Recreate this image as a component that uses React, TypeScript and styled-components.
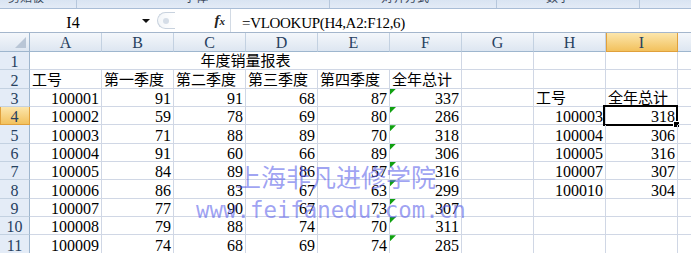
/*==================== Imports ====================*/

import React from "react"
import styled, { createGlobalStyle, css } from "styled-components"

/*==================== Data ====================*/

const COLUMNS = ["A", "B", "C", "D", "E", "F", "G", "H", "I", "J"]

const ids = ["100001", "100002", "100003", "100004", "100005", "100006", "100007", "100008", "100009"]
const quarters = [
    [91, 59, 71, 91, 84, 86, 77, 79, 74],
    [91, 78, 88, 60, 89, 83, 90, 88, 68],
    [68, 69, 89, 66, 86, 67, 67, 74, 69],
    [87, 80, 70, 89, 57, 63, 73, 70, 74],
]
const totals = [337, 286, 318, 306, 316, 299, 307, 311, 285]
const lookup = [
    ["100003", "318"],
    ["100004", "306"],
    ["100005", "316"],
    ["100007", "307"],
    ["100010", "304"],
]

const ribbonGroups = [
    { label: "剪贴板", width: 77, pad: 24 },
    { label: "字体", width: 253, pad: 14 },
    { label: "对齐方式", width: 167, pad: 16 },
    { label: "数字", width: 143, pad: 20 },
    { label: "", width: 60, pad: 0 },
]

type CellSpec = { text?: string; cjk?: boolean; right?: boolean; flag?: boolean; active?: boolean }

const buildRow = (r: number): CellSpec[] => {
    if (r === 2) {
        const heads = ["工号", "第一季度", "第二季度", "第三季度", "第四季度", "全年总计"]
        return [...heads.map(t => ({ text: t, cjk: true })), {}, {}, {}, {}]
    }
    const i = r - 3
    const row: CellSpec[] = [
        { text: ids[i], right: true },
        ...quarters.map(q => ({ text: String(q[i]), right: true })),
        { text: String(totals[i]), right: true, flag: true },
        {},
    ]
    if (r === 3) {
        row.push({ text: "工号", cjk: true }, { text: "全年总计", cjk: true })
    } else if (r >= 4 && r <= 8) {
        const [id, total] = lookup[r - 4]
        row.push({ text: id, right: true }, { text: total, right: true, active: r === 4 })
    } else {
        row.push({}, {})
    }
    row.push({})
    return row
}

/*==================== Styles ====================*/

const GlobalStyle = createGlobalStyle`
    html, body {
        margin: 0;
        background: #ffffff;
        overflow: hidden;
    }
`

const Window = styled.div`
    position: relative;
    width: 691px;
    height: 253px;
    overflow: hidden;
    background: #ffffff;
    font-family: "Liberation Serif", "Noto Sans CJK SC", serif;
`

const Ribbon = styled.div`
    display: flex;
    height: 8px;
    overflow: hidden;
    background: linear-gradient(#d9e4f2, #e3ebf6);
    border-bottom: 1px solid #a9bdd6;
`

const RibbonGroup = styled.div<{ $width: number; $pad: number }>`
    flex: 0 0 ${p => p.$width}px;
    display: flex;
    justify-content: center;
    align-items: flex-start;
    padding-right: ${p => p.$pad}px;
    box-sizing: border-box;
    border-right: 1px solid #b6c7dc;
`

const RibbonLabel = styled.span`
    margin-top: -10px;
    font: 12px/13px "Noto Sans CJK SC", sans-serif;
    color: #3d4a5c;
`

const FormulaBar = styled.div`
    display: flex;
    height: 23px;
    background: #ffffff;
    border-bottom: 1px solid #a4b6cc;
`

const NameBox = styled.div`
    flex: 0 0 155px;
    display: flex;
    align-items: flex-end;
    box-sizing: border-box;
`

const NameText = styled.span`
    flex: 1;
    text-align: center;
    padding-left: 4px;
    font-size: 16px;
    line-height: 18px;
    color: #000;
`

const DropArrow = styled.span`
    flex: 0 0 0;
    align-self: center;
    margin-right: 5px;
    border-left: 4px solid transparent;
    border-right: 4px solid transparent;
    border-top: 4px solid #111;
`

const Splitter = styled.div`
    flex: 0 0 18px;
    align-self: center;
    height: 17px;
    margin-left: 2px;
    display: flex;
    align-items: center;
    padding-left: 5px;
    box-sizing: border-box;
    border: 1px solid #c8d2de;
    border-right: none;
    border-radius: 9px 0 0 9px;
    background: linear-gradient(90deg, #f3f6f9, #ffffff);
`

const SplitterDot = styled.span`
    width: 6px;
    height: 6px;
    border-radius: 50%;
    background: #d5dde7;
`

const FxButton = styled.div`
    flex: 0 0 56px;
    display: flex;
    align-items: center;
    justify-content: flex-end;
    padding-right: 5px;
    box-sizing: border-box;
    font: italic bold 15px "Liberation Serif", serif;
    color: #222;
    border-right: 1px solid #d2dae4;

    small {
        font-size: 11px;
    }
`

const FormulaText = styled.div`
    flex: 1;
    display: flex;
    align-items: flex-end;
    padding-left: 11px;
    font-size: 15px;
    line-height: 17px;
    letter-spacing: -0.3px;
    color: #000;
    white-space: nowrap;
`

const Sheet = styled.div`
    display: grid;
    grid-template-columns: 30px repeat(10, 72px);
    grid-template-rows: 19px;
    grid-auto-rows: 18.33px;
`

const Corner = styled.div`
    display: flex;
    align-items: flex-end;
    justify-content: flex-end;
    padding: 0 3px 3px 0;
    background: linear-gradient(#f4f7fb, #dde6f1);
    border-right: 1px solid #9eb6ce;
    border-bottom: 1px solid #9eb6ce;
`

const CornerMark = styled.span`
    width: 11px;
    height: 11px;
    background: #b9c6d6;
    clip-path: polygon(100% 0, 100% 100%, 0 100%);
`

const selectedHead = css`
    background: linear-gradient(#fce6ac, #f2c15d);
    border-color: #e0a03c;
    box-shadow: inset 1px 0 #e0a03c;
`

const ColHead = styled.div<{ $selected?: boolean }>`
    display: flex;
    align-items: flex-end;
    justify-content: center;
    background: linear-gradient(#f4f7fb, #dde6f1);
    border-right: 1px solid #c3d1e1;
    border-bottom: 1px solid #9eb6ce;
    font-size: 16px;
    line-height: 16px;
    color: #27415f;
    ${p => p.$selected && selectedHead}
`

const RowHead = styled.div<{ $selected?: boolean }>`
    display: flex;
    align-items: flex-end;
    justify-content: center;
    background: #e4ecf7;
    border-right: 1px solid #9eb6ce;
    border-bottom: 1px solid #c3d1e1;
    font-size: 16px;
    line-height: 14px;
    color: #27415f;
    ${p => p.$selected && selectedHead}
`

const Cell = styled.div<{ $right?: boolean; $cjk?: boolean; $span?: number; $center?: boolean }>`
    position: relative;
    display: flex;
    align-items: flex-end;
    justify-content: ${p => (p.$center ? "center" : p.$right ? "flex-end" : "flex-start")};
    grid-column: span ${p => p.$span ?? 1};
    padding: 0 2px 0 2px;
    border-right: 1px solid #d0d7e5;
    border-bottom: 1px solid #d0d7e5;
    white-space: nowrap;
    color: #000;
    ${p =>
        p.$cjk
            ? css`
                  font: 15px/19px "Noto Sans CJK SC", sans-serif;
              `
            : css`
                  font-size: 16px;
                  line-height: 14px;
              `}
`

const ErrorFlag = styled.span`
    position: absolute;
    left: 0;
    top: 0;
    width: 6px;
    height: 6px;
    background: #10a010;
    clip-path: polygon(0 0, 100% 0, 0 100%);
`

const ActiveFrame = styled.span`
    position: absolute;
    top: -2px;
    left: -3px;
    right: -1px;
    bottom: -2px;
    border: 2px solid #000;
    pointer-events: none;

    &::after {
        content: "";
        position: absolute;
        right: -4px;
        bottom: -4px;
        width: 5px;
        height: 5px;
        background: #000;
        border: 1px solid #fff;
    }
`

const Watermark = styled.div`
    position: absolute;
    left: 196px;
    top: 164px;
    display: flex;
    flex-direction: column;
    pointer-events: none;
    color: rgba(78, 84, 232, 0.55);
`

const WatermarkName = styled.span`
    margin-left: 40px;
    font: 25px/25px "Noto Sans CJK SC", sans-serif;
`

const WatermarkUrl = styled.span`
    margin-top: 10px;
    font: 22.4px/22px "DejaVu Sans Mono", monospace;
`

/*==================== Component ====================*/

const App = () => {
    const rows = Array.from({ length: 10 }, (_, k) => k + 2)

    return (
        <Window>
            <GlobalStyle />
            <Ribbon>
                {ribbonGroups.map((g, i) => (
                    <RibbonGroup key={i} $width={g.width} $pad={g.pad}>
                        <RibbonLabel>{g.label}</RibbonLabel>
                    </RibbonGroup>
                ))}
            </Ribbon>

            <FormulaBar>
                <NameBox>
                    <NameText>I4</NameText>
                    <DropArrow />
                </NameBox>
                <Splitter>
                    <SplitterDot />
                </Splitter>
                <FxButton>
                    f<small>x</small>
                </FxButton>
                <FormulaText>=VLOOKUP(H4,A2:F12,6)</FormulaText>
            </FormulaBar>

            <Sheet>
                <Corner>
                    <CornerMark />
                </Corner>
                {COLUMNS.map(c => (
                    <ColHead key={c} $selected={c === "I"}>
                        {c}
                    </ColHead>
                ))}

                <RowHead>1</RowHead>
                <Cell $cjk $span={6} $center>
                    年度销量报表
                </Cell>
                <Cell />
                <Cell />
                <Cell />
                <Cell />

                {rows.map(r => (
                    <React.Fragment key={r}>
                        <RowHead $selected={r === 4}>{r}</RowHead>
                        {buildRow(r).map((cell, i) => (
                            <Cell key={i} $right={cell.right} $cjk={cell.cjk}>
                                {cell.flag && <ErrorFlag />}
                                {cell.text}
                                {cell.active && <ActiveFrame />}
                            </Cell>
                        ))}
                    </React.Fragment>
                ))}
            </Sheet>

            <Watermark>
                <WatermarkName>上海非凡进修学院</WatermarkName>
                <WatermarkUrl>www.feifanedu.com.cn</WatermarkUrl>
            </Watermark>
        </Window>
    )
}

export default App
